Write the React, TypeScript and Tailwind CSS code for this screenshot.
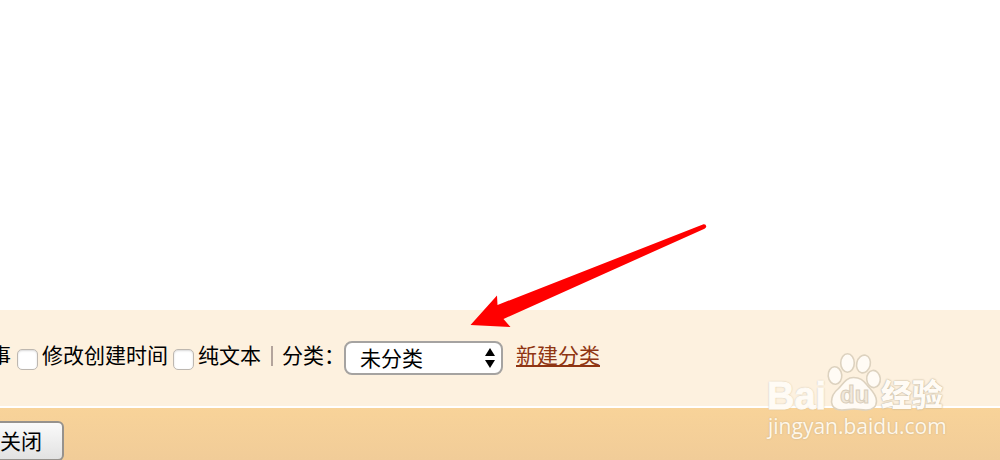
import React from "react";

function Checkbox({ id }: { id: string }) {
  return (
    <input
      id={id}
      type="checkbox"
      className="mt-[3px] size-[21px] shrink-0 appearance-none rounded-[5px] border border-[#bdb7b0] bg-white shadow-[inset_0_1px_2px_#d8d8d8] checked:bg-[#8f3513]"
    />
  );
}

function OptionsBar() {
  return (
    <form className="flex h-24 items-center overflow-hidden bg-[#fdf1df] whitespace-nowrap">
      <span className="-ml-[10px] w-[27px] shrink-0 pb-1">事</span>
      <Checkbox id="change-time" />
      <label htmlFor="change-time" className="ml-1 w-[131px] shrink-0 pb-1">
        修改创建时间
      </label>
      <Checkbox id="plain-text" />
      <label htmlFor="plain-text" className="ml-1 shrink-0 pb-1">
        纯文本
      </label>
      <span className="mr-[9px] mb-1 ml-[10px] h-5 w-[2px] shrink-0 bg-[#b3a49c]" />
      <label htmlFor="category" className="w-[62px] shrink-0 pb-1">
        分类：
      </label>
      <div className="relative shrink-0">
        <select
          id="category"
          defaultValue="none"
          className="block h-[34px] w-[159px] appearance-none rounded-lg border-2 border-[#a5a3a1] bg-white pt-[2px] pl-[14px] leading-7"
        >
          <option value="none">未分类</option>
        </select>
        <svg viewBox="0 0 10 20" className="pointer-events-none absolute top-[7px] right-2 h-5 w-[10px]" aria-hidden="true">
          <path d="M5 0 10 8H0ZM0 12H10L5 20Z" fill="#000" />
        </svg>
      </div>
      <a href="#new-category" className="ml-[13px] shrink-0 pb-1 text-[#8f3513] underline decoration-2 underline-offset-2">
        新建分类
      </a>
    </form>
  );
}

function Arrow() {
  return (
    <svg viewBox="0 0 260 120" className="pointer-events-none absolute bottom-[125px] left-[460px] h-[120px] w-[260px]" aria-hidden="true">
      <path
        d="M10.5 110 37 80.5 37.5 90 243.5 9.3Q246 9 246.3 11.5 246 13 244.5 13.7L43.5 104 50.5 112Z"
        fill="#ff0000"
      />
    </svg>
  );
}

function Watermark() {
  return (
    <div className="pointer-events-none absolute bottom-4 left-[767px] h-[92px] w-[182px] text-[#fffbf5]">
      <svg viewBox="0 0 182 92" className="absolute inset-0 h-[92px] w-[182px]" aria-hidden="true">
        <g fill="#fffbf5" stroke="#ddd2bf" strokeWidth="1.6">
          <ellipse cx="68" cy="23.5" rx="6.8" ry="8.8" transform="rotate(-5 68 23.5)" />
          <ellipse cx="80.5" cy="11" rx="6.8" ry="9.3" />
          <ellipse cx="96.5" cy="12" rx="6.8" ry="9" transform="rotate(14 96.5 12)" />
          <ellipse cx="106.5" cy="27" rx="6.8" ry="8.6" transform="rotate(-6 106.5 27)" />
          <path d="M86.500 25.500C79 25.500 76 32 71 37C66 41 64.500 45 64.500 50C65 56 69 58 75 58C80 58 82 57 87 57C92 57 94 58 99 58C105 58 109.500 55 109.500 49C109.500 42 104 38 100 33C96 28 93 25.500 86.500 25.500Z" />
        </g>
      </svg>
      <span className="absolute top-[28px] left-0 font-['Liberation_Sans',sans-serif] text-[38px] leading-8 font-bold [-webkit-text-stroke:1px_#fffbf5] [text-shadow:0_0_2px_#b5a88f,0_0_1px_#d5c8b0]">
        Bai
      </span>
      <span className="absolute top-[31px] left-[73px] font-['Liberation_Sans',sans-serif] text-[24px] leading-6 font-bold text-[#f1e8da] [-webkit-text-stroke:1px_#d9cebb]">
        du
      </span>
      <span className="absolute top-[25px] left-[114px] font-['Noto_Sans_CJK_SC',sans-serif] text-[31px] leading-8 font-black whitespace-nowrap [text-shadow:0_0_2px_#b5a88f,0_0_1px_#d5c8b0]">
        经验
      </span>
      <span className="absolute top-[64px] left-[1px] font-['Open_Sans',sans-serif] text-[21px] leading-5 whitespace-nowrap text-[#fff7ea] [text-shadow:0_0_2px_#c5b089]">
        jingyan.baidu.com
      </span>
    </div>
  );
}

export default function App() {
  return (
    <div className="relative flex min-h-screen flex-col overflow-hidden bg-white font-['Liberation_Sans','Noto_Sans_CJK_SC',sans-serif] text-[21px] leading-8 text-black">
      <main className="flex-1" />
      <OptionsBar />
      <footer className="mt-[2px] h-[52px] overflow-hidden bg-linear-to-b from-[#f8d399] to-[#f1cc98] pt-[13px]">
        <button
          type="button"
          className="-ml-5 flex h-10 w-[84px] items-center rounded-md border-2 border-[#96928d] bg-linear-to-b from-[#fafafa] to-[#e2e2e2] pt-[2px] pl-[18px] whitespace-nowrap"
        >
          关闭
        </button>
      </footer>
      <Arrow />
      <Watermark />
    </div>
  );
}
